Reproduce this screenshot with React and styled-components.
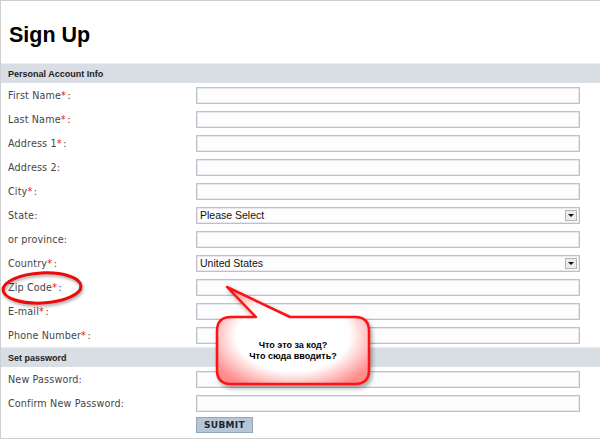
import React from 'react';
import styled, {createGlobalStyle} from 'styled-components';

const GlobalStyle = createGlobalStyle`
  html, body {
    margin: 0;
    padding: 0;
    background: #fff;
  }
`;

const Page = styled.div`
  position: relative;
  width: 600px;
  height: 439px;
  box-sizing: border-box;
  border-top: 1px solid #cfcfcf;
  border-left: 1px solid #cfcfcf;
  border-bottom: 1px solid #cfcfcf;
  font-family: "DejaVu Sans", Verdana, sans-serif;
  overflow: hidden;
`;

const Title = styled.h1`
  margin: 0;
  height: 62px;
  box-sizing: border-box;
  padding: 22px 0 0 8px;
  font-family: "Liberation Sans", Arial, sans-serif;
  font-size: 21.5px;
  line-height: 24px;
  font-weight: bold;
  color: #000;
`;

const SectionHead = styled.div`
  height: 20px;
  box-sizing: border-box;
  padding-left: 7px;
  background: #d9dde4;
  border-top: 1px solid #eceef2;
  display: flex;
  align-items: center;
  font-family: "Liberation Sans", Arial, sans-serif;
  font-size: 9px;
  font-weight: bold;
  color: #1c1c1c;
`;

const FieldRow = styled.div`
  height: 24px;
  display: grid;
  grid-template-columns: 188px 384px;
  align-items: center;
  padding-left: 7px;
`;

const Label = styled.span`
  font-size: 9.6px;
  color: #454545;
  letter-spacing: 0.15px;
`;

const Req = styled.span`
  color: #e8141c;
  margin-right: 1.5px;
`;

const TextInput = styled.input`
  height: 17px;
  width: 384px;
  box-sizing: border-box;
  margin: 0;
  padding: 0 3px;
  border: 1px solid #bfc1ca;
  box-shadow: inset 0 0 0 1px #e7e7ed;
  background: #fdfdfd;
  outline: none;
`;

const SelectBox = styled.div`
  height: 17px;
  width: 384px;
  box-sizing: border-box;
  padding: 0 2px 0 3px;
  border: 1px solid #bfc1ca;
  box-shadow: inset 0 0 0 1px #e7e7ed;
  background: #fdfdfd;
  display: flex;
  align-items: center;
  justify-content: space-between;
  font-family: "Liberation Sans", Arial, sans-serif;
  font-size: 10.5px;
  color: #111;
`;

const ArrowBtn = styled.span`
  width: 12px;
  height: 11px;
  box-sizing: border-box;
  border: 1px solid #b4b4b4;
  background: #ececec;
  display: flex;
  align-items: center;
  justify-content: center;

  &::after {
    content: '';
    border-left: 3px solid transparent;
    border-right: 3px solid transparent;
    border-top: 3px solid #111;
  }
`;

const SubmitRow = styled.div`
  display: flex;
  padding: 2px 0 0 195px;
`;

const SubmitButton = styled.button`
  width: 57px;
  height: 16px;
  box-sizing: border-box;
  margin: 0;
  padding: 0;
  border: 1px solid #93a5bb;
  background: #b6c6d8;
  font-family: "DejaVu Sans", Verdana, sans-serif;
  font-size: 9px;
  font-weight: bold;
  color: #1a2433;
  letter-spacing: 0.3px;
  line-height: 14px;
`;

const Ring = styled.svg`
  position: absolute;
  left: 0;
  top: 266px;
  width: 92px;
  height: 44px;
  overflow: visible;
  filter: drop-shadow(1px 2px 1.5px rgba(0, 0, 0, 0.35));
`;

const Callout = styled.div`
  position: absolute;
  left: 200px;
  top: 280px;
  width: 185px;
  height: 115px;
`;

const CalloutShape = styled.svg`
  position: absolute;
  inset: 0;
  overflow: visible;
  filter: drop-shadow(2px 3px 2px rgba(0, 0, 0, 0.35));
`;

const CalloutText = styled.div`
  position: absolute;
  left: 16px;
  top: 36px;
  width: 152px;
  height: 67px;
  display: flex;
  flex-direction: column;
  align-items: center;
  justify-content: center;
  font-family: "Liberation Sans", Arial, sans-serif;
  font-size: 9px;
  font-weight: bold;
  line-height: 11px;
  color: #000;
`;

const personal = [
    {label: 'First Name', req: true},
    {label: 'Last Name', req: true},
    {label: 'Address 1', req: true},
    {label: 'Address 2'},
    {label: 'City', req: true},
    {label: 'State', select: 'Please Select'},
    {label: 'or province'},
    {label: 'Country', req: true, select: 'United States'},
    {label: 'Zip Code', req: true},
    {label: 'E-mail', req: true},
    {label: 'Phone Number', req: true}
];

const passwords = ['New Password', 'Confirm New Password'];

function Field({label, req, select}) {
    return (
        <FieldRow>
            <Label>{label}{req && <Req>*</Req>}:</Label>
            {select
                ? <SelectBox>{select}<ArrowBtn/></SelectBox>
                : <TextInput type="text"/>}
        </FieldRow>
    );
}

export default function App() {
    return (
        <Page>
            <GlobalStyle/>
            <Title>Sign Up</Title>
            <SectionHead>Personal Account Info</SectionHead>
            {personal.map((f) => <Field key={f.label} {...f}/>)}
            <SectionHead>Set password</SectionHead>
            {passwords.map((p) => <Field key={p} label={p}/>)}
            <SubmitRow>
                <SubmitButton>SUBMIT</SubmitButton>
            </SubmitRow>

            <Ring viewBox="0 266 92 44">
                <ellipse cx="41" cy="287" rx="39" ry="15" fill="none" stroke="#ee0a0a" strokeWidth="3"
                         transform="rotate(-3 41 287)"/>
            </Ring>

            <Callout>
                <CalloutShape viewBox="200 280 185 115">
                    <defs>
                        <radialGradient id="bubbleFill" cx="50%" cy="50%" r="60%">
                            <stop offset="0%" stopColor="#ffffff"/>
                            <stop offset="62%" stopColor="#ffffff"/>
                            <stop offset="100%" stopColor="#ff8c8c"/>
                        </radialGradient>
                    </defs>
                    <path
                        d="M230 316 L255 316 L226 286 L289 316 L354 316 Q368 316 368 330 L368 369 Q368 383 354 383 L230 383 Q216 383 216 369 L216 330 Q216 316 230 316 Z"
                        fill="url(#bubbleFill)" stroke="#ff1212" strokeWidth="2.5" strokeLinejoin="round"/>
                </CalloutShape>
                <CalloutText>
                    <div>Что это за код?</div>
                    <div>Что сюда вводить?</div>
                </CalloutText>
            </Callout>
        </Page>
    );
}
